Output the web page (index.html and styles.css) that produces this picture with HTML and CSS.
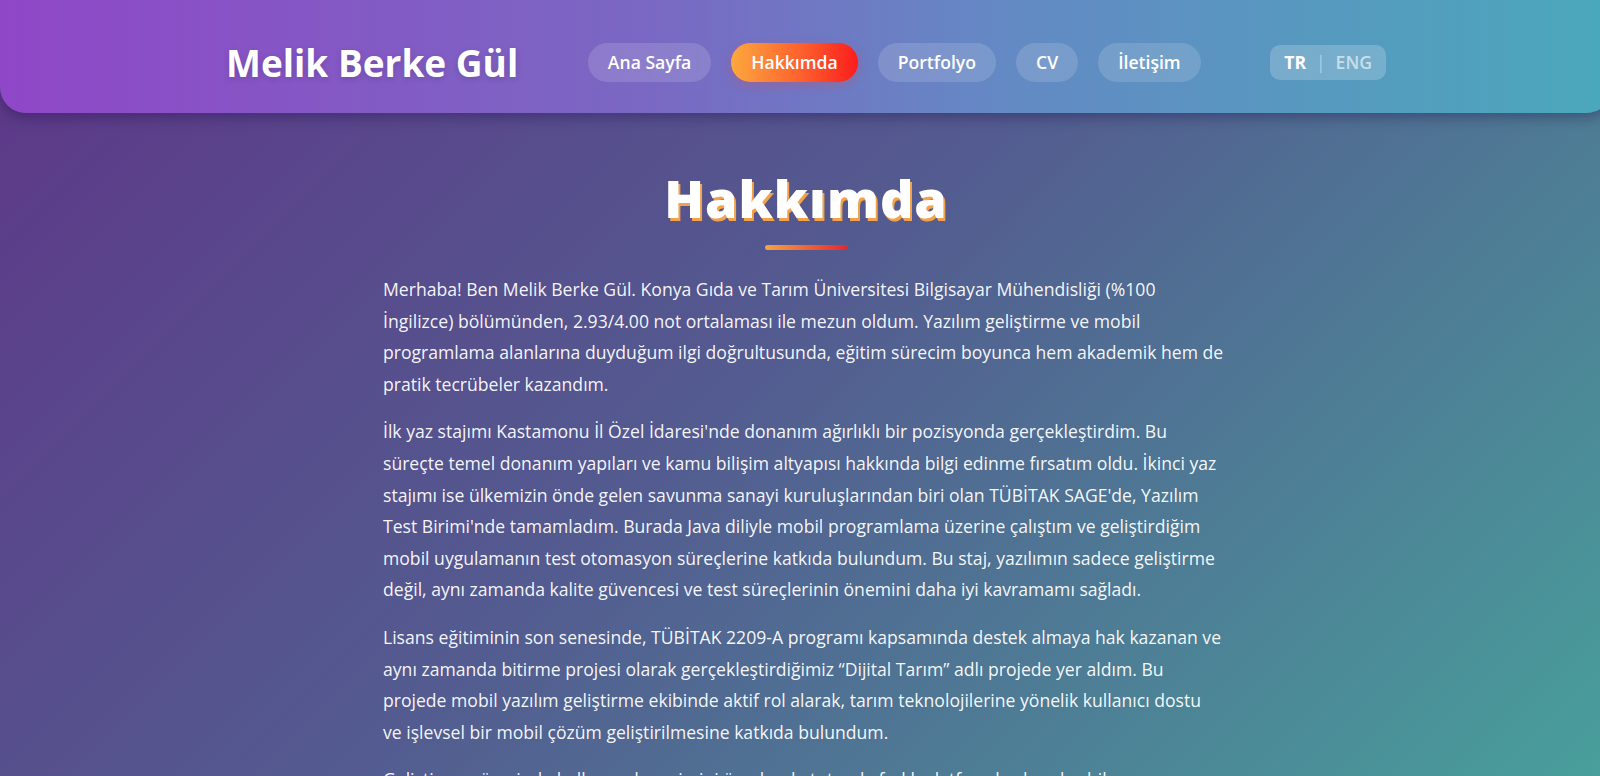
FILE: index.html
```html
<!DOCTYPE html>
<html lang="tr">
<head>
<meta charset="utf-8">
<title>Hakkımda - Melik Berke Gül</title>
<link rel="stylesheet" href="styles.css">
</head>
<body>
<div class="site">
  <header class="site-header">
    <div class="header-inner">
      <a class="logo" href="#">Melik Berke Gül</a>
      <nav class="nav">
        <a class="nav-link" href="#">Ana Sayfa</a>
        <a class="nav-link active" href="#">Hakkımda</a>
        <a class="nav-link" href="#">Portfolyo</a>
        <a class="nav-link" href="#">CV</a>
        <a class="nav-link" href="#">İletişim</a>
      </nav>
      <div class="lang">
        <span class="lang-item current">TR</span>
        <span class="lang-sep">|</span>
        <span class="lang-item">ENG</span>
      </div>
    </div>
  </header>

  <main class="about">
    <h1 class="title">Hakkımda</h1>
    <div class="title-bar"></div>
    <p>Merhaba! Ben Melik Berke Gül. Konya Gıda ve Tarım Üniversitesi Bilgisayar Mühendisliği (%100 İngilizce) bölümünden, 2.93/4.00 not ortalaması ile mezun oldum. Yazılım geliştirme ve mobil programlama alanlarına duyduğum ilgi doğrultusunda, eğitim sürecim boyunca hem akademik hem de pratik tecrübeler kazandım.</p>
    <p>İlk yaz stajımı Kastamonu İl Özel İdaresi'nde donanım ağırlıklı bir pozisyonda gerçekleştirdim. Bu süreçte temel donanım yapıları ve kamu bilişim altyapısı hakkında bilgi edinme fırsatım oldu. İkinci yaz stajımı ise ülkemizin önde gelen savunma sanayi kuruluşlarından biri olan TÜBİTAK SAGE'de, Yazılım Test Birimi'nde tamamladım. Burada Java diliyle mobil programlama üzerine çalıştım ve geliştirdiğim mobil uygulamanın test otomasyon süreçlerine katkıda bulundum. Bu staj, yazılımın sadece geliştirme değil, aynı zamanda kalite güvencesi ve test süreçlerinin önemini daha iyi kavramamı sağladı.</p>
    <p>Lisans eğitiminin son senesinde, TÜBİTAK 2209-A programı kapsamında destek almaya hak kazanan ve aynı zamanda bitirme projesi olarak gerçekleştirdiğimiz “Dijital Tarım” adlı projede yer aldım. Bu projede mobil yazılım geliştirme ekibinde aktif rol alarak, tarım teknolojilerine yönelik kullanıcı dostu ve&nbsp;işlevsel bir mobil çözüm geliştirilmesine katkıda bulundum.</p>
    <p>Geliştirme sürecinde kullanıcı deneyimini ön planda tutarak, farklı platformlarda çalışabilen uygulamalar geliştirmeye ve kendimi sürekli yenilemeye önem veriyorum.</p>
  </main>
</div>
</body>
</html>
```

FILE: styles.css
```css
* {
  box-sizing: border-box;
}

html, body {
  margin: 0;
  padding: 0;
}

body {
  font-family: "Open Sans", "Noto Sans", sans-serif;
  color: #ffffff;
  background: linear-gradient(135deg, #5e3688 0%, #535c90 48%, #489f9b 100%);
  background-attachment: fixed;
  min-height: 100vh;
  overflow-x: hidden;
}

.site {
  width: calc(100% + 12px);
}

.site-header {
  background: linear-gradient(90deg, #8f47c7 0%, #7a68c3 40%, #6489c4 62%, #4aa8bb 100%);
  border-radius: 0 0 26px 26px;
  box-shadow: 0 4px 14px rgba(20, 10, 60, 0.35);
  height: 113px;
  padding-top: 12px;
  display: flex;
  align-items: center;
}

.header-inner {
  width: 100%;
  max-width: 1200px;
  margin: 0 auto;
  padding: 0 20px 0 20px;
  display: flex;
  align-items: center;
  justify-content: space-between;
}

.logo {
  font-size: 37px;
  font-weight: 700;
  color: #ffffff;
  text-decoration: none;
  letter-spacing: 0;
  text-shadow: 0 2px 6px rgba(0, 0, 0, 0.15);
}

.nav {
  display: flex;
  gap: 20px;
}

.nav-link {
  display: block;
  padding: 8px 20px;
  line-height: 23px;
  font-size: 17.6px;
  font-weight: 600;
  color: #ffffff;
  text-decoration: none;
  background: rgba(255, 255, 255, 0.14);
  border-radius: 22px;
}

.nav-link.active {
  background: linear-gradient(90deg, #fca83e 0%, #fd5a2c 60%, #fb1c1c 100%);
  box-shadow: 0 3px 10px rgba(250, 60, 40, 0.25);
}

.lang {
  display: flex;
  align-items: center;
  gap: 10px;
  padding: 6px 14px;
  line-height: 23px;
  font-size: 17.6px;
  background: rgba(255, 255, 255, 0.2);
  border-radius: 10px;
}

.lang-item {
  color: rgba(255, 255, 255, 0.6);
  font-weight: 600;
}

.lang-item.current {
  color: #ffffff;
  font-weight: 700;
}

.lang-sep {
  color: rgba(255, 255, 255, 0.6);
  font-weight: 300;
}

.about {
  max-width: 846px;
  margin: 0 auto;
  padding-top: 50px;
}

.title {
  margin: 0;
  text-align: center;
  font-family: "Open Sans", sans-serif;
  font-weight: 800;
  font-size: 52px;
  line-height: 70px;
  letter-spacing: 1px;
  color: #ffffff;
  text-shadow: 2px 3px 0 #f2a24a;
}

.title-bar {
  width: 82px;
  height: 5px;
  margin: 12px auto 24px;
  border-radius: 3px;
  background: linear-gradient(90deg, #f5a445 0%, #e8262e 100%);
}

.about p {
  margin: 0 0 16px;
  font-size: 17.6px;
  line-height: 31.6px;
  color: rgba(255, 255, 255, 0.96);
}
```
